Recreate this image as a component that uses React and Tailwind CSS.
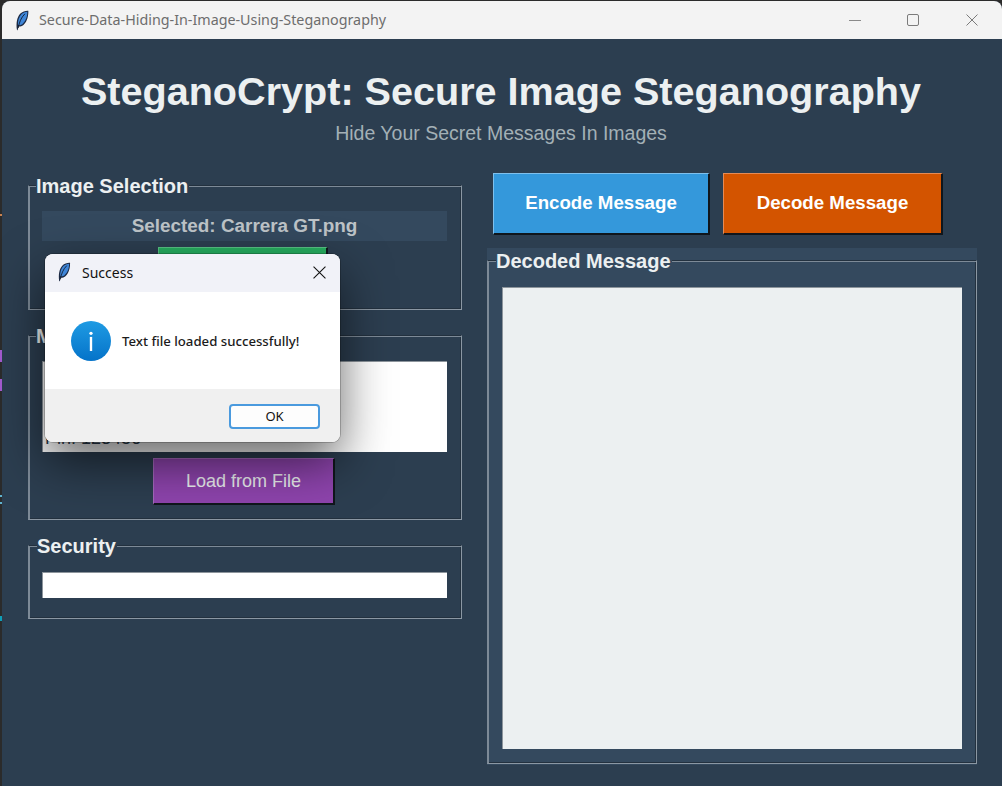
const Feather = ({ className }) => (
  <svg viewBox="2 0 13 22" className={className}>
    <path d="M2.6 20.5 C1.8 14 2.5 8 6 4 C8.5 1.5 12 0.6 14.6 0.8 C14.8 6 13.5 12 9.5 15.6 C7.5 17.2 5.6 17.4 4.2 17.2 L3.4 21.4 Z" fill="#1c2a44" />
    <path d="M3.8 15.8 C3.4 11 5 6.8 7.6 4.2 C9.6 2.6 11.6 2 13.6 1.9 C13.6 6.4 12.4 11 8.8 14.4 C7.2 15.8 5.4 16.2 3.8 15.8 Z" fill="#3f86d8" />
    <path d="M4 19 C5 13 7 8 11 4" stroke="#0d1524" strokeWidth="0.9" fill="none" />
  </svg>
);

const Frame = ({ label, className, labelClass, children }) => (
  <div className={`border border-t-[#23313f] border-l-[#7d8a97] border-r-[#8b97a3] border-b-[#8b97a3] shadow-[inset_1px_1px_0_#7d8a97,inset_-1px_-1px_0_#23313f] ${className}`}>
    <div className={`-mt-[11px] w-fit pr-px text-[20px] leading-[23px] font-bold text-[#ecf0f1] ${labelClass}`}>
      {label}
    </div>
    {children}
  </div>
);

const RaisedButton = ({ className, children }) => (
  <button className={`flex items-center justify-center border-t border-l border-r-2 border-b-2 border-r-[#10161c] border-b-[#10161c] ${className}`}>
    {children}
  </button>
);

export default function App() {
  return (
    <div className="relative w-[1002px] h-[786px] overflow-hidden bg-[#2b2b2b] pt-px pl-[2px] font-['Liberation_Sans',Arial,sans-serif]">
      {/* desktop peeking out at the left edge */}
      <div className="absolute left-0 top-[214px] w-[2px] h-[2px] bg-[#c9824f]" />
      <div className="absolute left-0 top-[350px] w-[2px] h-[12px] bg-[#a45bd0]" />
      <div className="absolute left-0 top-[379px] w-[2px] h-[12px] bg-[#a45bd0]" />
      <div className="absolute left-0 top-[495px] w-[2px] h-[2px] bg-[#5fb3d0]" />
      <div className="absolute left-0 top-[502px] w-[2px] h-[2px] bg-[#5fb3d0]" />
      <div className="absolute left-0 top-[616px] w-[2px] h-[5px] bg-[#0f9fb8]" />

      <div className="h-[785px] rounded-t-lg overflow-hidden flex flex-col bg-[#2c3e50]">
        {/* window title bar */}
        <div className="h-[38px] shrink-0 flex items-center bg-[#f3f3f3]">
          <Feather className="w-[13px] h-[21px] ml-[14px]" />
          <span className="ml-[10px] font-['Noto_Sans',sans-serif] text-[14.3px] text-[#6d6d6d]">
            Secure-Data-Hiding-In-Image-Using-Steganography
          </span>
          <div className="ml-auto flex items-center gap-[46px] pr-[24px]">
            <div className="w-[12px] h-px bg-[#8a8a8a]" />
            <div className="w-[12px] h-[12px] border border-[#7b7b7b] rounded-[2px]" />
            <svg viewBox="0 0 12 12" className="ml-px w-[12px] h-[12px]" stroke="#7b7b7b" strokeWidth="1">
              <path d="M0.5 0.5 L11.5 11.5 M11.5 0.5 L0.5 11.5" />
            </svg>
          </div>
        </div>

        {/* heading */}
        <div className="text-center pr-[2px]">
          <h1 className="mt-[29px] text-[39.6px] leading-[46px] font-bold text-[#ecf0f1]">
            SteganoCrypt: Secure Image Steganography
          </h1>
          <p className="mt-[8px] text-[19.5px] leading-[23px] text-[#a3b0b6]">Hide Your Secret Messages In Images</p>
        </div>

        <div className="flex mt-[28px]">
          {/* left column */}
          <div className="w-[434px] ml-[26px] flex flex-col pt-[12px]">
            <Frame label="Image Selection" labelClass="-ml-[6px] bg-[#2c3e50]" className="h-[125px] pl-[13px] pr-[14px]">
              <div className="mt-[13px] h-[30px] flex items-center justify-center bg-[#34495e] text-[18.9px] font-bold text-[#bdc3c7]">
                Selected: Carrera GT.png
              </div>
              <RaisedButton className="mt-[6px] ml-[116px] w-[170px] h-[47px] bg-[#27ae60] border-t-[#58c184] border-l-[#58c184]" />
            </Frame>
            <Frame label="Message" labelClass="-ml-[6px] bg-[#2c3e50]" className="mt-[25px] h-[185px] pl-[13px] pr-[14px]">
              <div className="mt-[13px] h-[91px] flex items-end bg-white border-t border-l border-[#8d959c] pl-[2px] pb-[3px] text-[18px] leading-[21px] text-[#2c3e50] overflow-hidden">
                Pin: 123456
              </div>
              <RaisedButton className="mt-[6px] ml-[111px] w-[182px] h-[47px] bg-[#8e44ad] border-t-[#a569bd] border-l-[#a569bd] text-[18px] text-[#ecf0f1]">
                Load from File
              </RaisedButton>
            </Frame>
            <Frame label="Security" labelClass="-ml-[5px] bg-[#2c3e50]" className="mt-[25px] h-[74px] pl-[13px] pr-[14px]">
              <div className="mt-[14px] h-[26px] bg-white border-t border-l border-[#8d959c]" />
            </Frame>
          </div>

          {/* right column */}
          <div className="w-[490px] ml-[25px]">
            <div className="flex gap-[13px] pl-[6px]">
              <RaisedButton className="w-[217px] h-[62px] bg-[#3498db] border-t-[#7fc0ec] border-l-[#7fc0ec] text-[18.7px] font-bold text-white">
                Encode Message
              </RaisedButton>
              <RaisedButton className="w-[220px] h-[62px] bg-[#d35400] border-t-[#e58b55] border-l-[#e58b55] text-[18.7px] font-bold text-white">
                Decode Message
              </RaisedButton>
            </div>
            <div className="mt-[13px] h-[517px] bg-[#34495e] pt-[12px]">
              <Frame label="Decoded Message" labelClass="-ml-[6px] bg-[#34495e]" className="h-[504px] px-[14px]">
                <div className="mt-[14px] h-[462px] bg-[#ecf0f1] border-t border-l border-[#8d959c]" />
              </Frame>
            </div>
          </div>
        </div>
      </div>

      {/* message box over the window */}
      <div className="absolute left-[45px] top-[254px] w-[295px] h-[188px] rounded-lg overflow-hidden flex flex-col bg-white ring-1 ring-black/20 shadow-[0_20px_50px_rgba(0,0,0,0.6)] font-['Noto_Sans',sans-serif]">
        <div className="h-[38px] flex items-center bg-[#f1f2f8] pb-[2px]">
          <Feather className="w-[13px] h-[20px] ml-[13px]" />
          <span className="ml-[11px] text-[14px] text-[#111]">Success</span>
          <svg viewBox="0 0 12 12" className="ml-auto mr-[14px] w-[13px] h-[13px]" stroke="#111" strokeWidth="1">
            <path d="M0.5 0.5 L11.5 11.5 M11.5 0.5 L0.5 11.5" />
          </svg>
        </div>
        <div className="h-[97px] flex items-center pl-[26px] gap-[11px]">
          <div className="w-[40px] h-[40px] rounded-full flex items-center justify-center bg-gradient-to-b from-[#1f9be3] to-[#0573c9]">
            <svg viewBox="0 0 6 22" className="w-[6px] h-[20px]" fill="#fff">
              <circle cx="3" cy="2.5" r="1.8" />
              <rect x="1.7" y="6.5" width="2.6" height="15.5" />
            </svg>
          </div>
          <span className="pt-[2px] text-[13.2px] font-medium text-[#1b1b1b]">Text file loaded successfully!</span>
        </div>
        <div className="flex-1 flex items-center justify-end pr-[20px] bg-[#f0f0f0] pt-[2px]">
          <button className="w-[91px] h-[25px] rounded-[4px] bg-[#fdfdfd] border-2 border-[#4a9ade] text-[13px] text-[#111]">
            OK
          </button>
        </div>
      </div>
    </div>
  );
}
